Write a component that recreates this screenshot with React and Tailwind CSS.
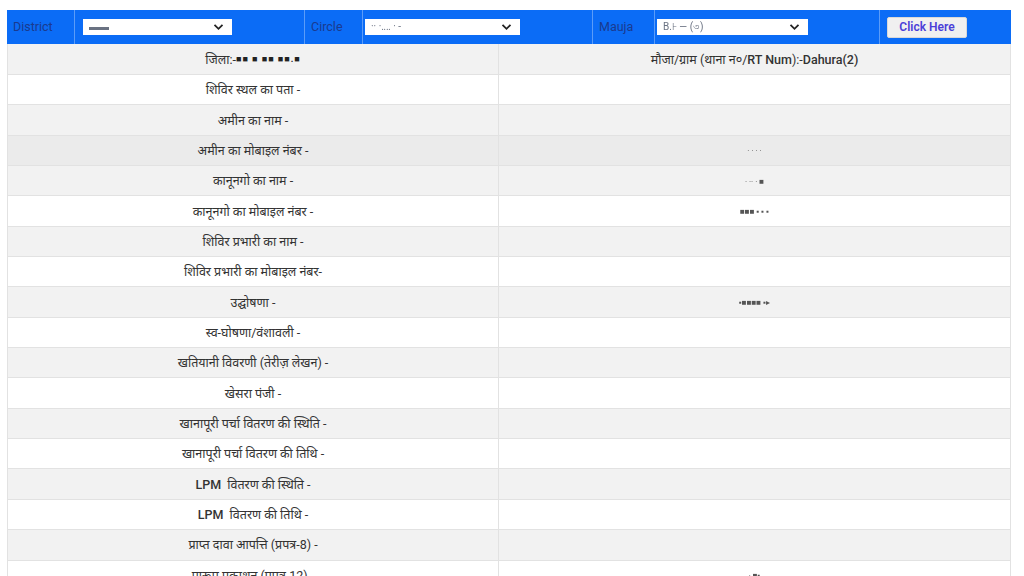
const rows = [
  { label: "शिविर स्थल का पता -", value: "" },
  { label: "अमीन का नाम -", value: "" },
  { label: "अमीन का मोबाइल नंबर -", value: "·  ·  ·  ·", hover: true },
  { label: "कानूनगो का नाम -", value: "· ·· ·   ■" },
  { label: "कानूनगो का मोबाइल नंबर -", value: "■■■ ▪ ▪ ▪" },
  { label: "शिविर प्रभारी का नाम -", value: "" },
  { label: "शिविर प्रभारी का मोबाइल नंबर-", value: "" },
  { label: "उद्घोषणा -", value: "▪■■■■    ▪▸" },
  { label: "स्व-घोषणा/वंशावली -", value: "" },
  { label: "खतियानी विवरणी (तेरीज़ लेखन) -", value: "" },
  { label: "खेसरा पंजी -", value: "" },
  { label: "खानापूरी पर्चा वितरण की स्थिति -", value: "" },
  { label: "खानापूरी पर्चा वितरण की तिथि -", value: "" },
  { label: <><b className="font-medium">LPM</b>&nbsp; वितरण की स्थिति -</>, value: "" },
  { label: <><b className="font-medium">LPM</b>&nbsp; वितरण की तिथि -</>, value: "" },
  { label: "प्राप्त दावा आपत्ति (प्रपत्र-8)  -", value: "" },
  { label: "प्रारूप प्रकाशन (प्रपत्र-12) -", value: "· ■▪" },
];

const Chevron = () => (
  <svg width="11" height="8" viewBox="0 0 11 8" className="shrink-0">
    <path d="M1.5 1.8 L5.5 5.8 L9.5 1.8" stroke="#222" strokeWidth="1.8" fill="none" />
  </svg>
);

const FakeSelect = ({ width, text }) => (
  <div
    className="h-[16px] bg-white flex items-center justify-between pl-[6px] pr-[8px]"
    style={{ width }}
  >
    <span className="text-[10px] text-gray-500 blur-[0.6px] leading-none">{text}</span>
    <Chevron />
  </div>
);

const App = () => {
  return (
    <div className="w-[1024px] h-[576px] overflow-hidden bg-white pt-[10px] px-[7px] font-['Roboto','Noto_Sans',sans-serif]">
      <div className="w-[1004px]">
        {/* Header bar */}
        <div className="flex h-[34px] bg-[#0b6cf6] text-[12.5px] text-[#1a3a8f]">
          <div className="w-[68px] flex items-center pl-[6px] border-r border-[#5b9cf8]">District</div>
          <div className="w-[230px] flex items-center pl-[8px] border-r border-[#5b9cf8]">
            <FakeSelect width={149} text="▬▬" />
          </div>
          <div className="w-[58px] flex items-center pl-[6px] border-r border-[#5b9cf8]">Circle</div>
          <div className="w-[230px] flex items-center pl-[2px] border-r border-[#5b9cf8]">
            <FakeSelect width={155} text="·· ·‥‥ ·  -" />
          </div>
          <div className="w-[62px] flex items-center pl-[6px] border-r border-[#5b9cf8]">Mauja</div>
          <div className="w-[225px] flex items-center pl-[2px] border-r border-[#5b9cf8]">
            <FakeSelect width={151} text="B.⊦ — (৩)" />
          </div>
          <div className="flex-1 flex items-center pl-[7px]">
            <button className="w-[80px] h-[21px] bg-[#f0f0f0] border border-[#d8d8d8] rounded-[2px] text-[12px] font-semibold text-[#4b3fd8]">
              Click Here
            </button>
          </div>
        </div>

        {/* Table */}
        <div className="border-l border-r border-[#e2e2e2] text-[12.5px] text-[#333]">
          <div className="flex h-[31px] bg-[#f2f2f2] border-b border-[#e2e2e2]">
            <div className="w-[491px] flex items-center justify-center pt-[2px] border-r border-[#e2e2e2]">
              जिला:-<span className="text-[9px] font-bold tracking-[1px] text-[#222]">■■ ■ ■■ ■■.■</span>
            </div>
            <div className="flex-1 flex items-center justify-center pt-[2px]">
              मौजा/ग्राम (थाना न०/<span className="font-medium">RT Num</span>):-<span className="font-medium">Dahura(2)</span>
            </div>
          </div>
          {rows.map((r, i) => (
            <div
              key={i}
              className={
                "flex h-[30.35px] border-b border-[#e2e2e2] " +
                (r.hover ? "bg-[#ebebeb]" : i % 2 === 1 ? "bg-[#f2f2f2]" : "bg-white")
              }
            >
              <div className="w-[491px] flex items-center justify-center pt-[2px] border-r border-[#e2e2e2]">
                {r.label}
              </div>
              <div className="flex-1 flex items-center justify-center pt-[2px]">
                <span className="text-[8px] text-[#555] blur-[0.5px]">{r.value}</span>
              </div>
            </div>
          ))}
        </div>
      </div>
    </div>
  );
};

export default App;
